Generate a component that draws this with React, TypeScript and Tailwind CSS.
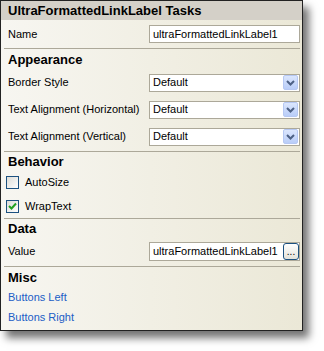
import React from 'react';

function Chevron() {
  return (
    <span className="w-[15px] h-[15px] mr-[1px] flex items-center justify-center rounded-[2px] border border-[#b6c8f3] bg-gradient-to-b from-[#dbe6fd] to-[#b9cdf8]">
      <svg width="9" height="6" viewBox="0 0 9 6">
        <path d="M1 1 L4.5 4.5 L8 1" stroke="#4d6185" strokeWidth="2" fill="none" />
      </svg>
    </span>
  );
}

function Combo() {
  return (
    <div className="w-[151px] h-[18px] bg-white border border-[#aca899] flex items-center justify-between pl-[3px]">
      <span>Default</span>
      <Chevron />
    </div>
  );
}

function Check({ on }: { on?: boolean }) {
  return (
    <span className="w-[13px] h-[13px] border border-[#1c5180] bg-gradient-to-br from-[#dcdcd7] to-white flex items-center justify-center">
      {on && (
        <svg width="9" height="9" viewBox="0 0 9 9">
          <path d="M1 4 L3.5 6.5 L8 1.5" stroke="#21a121" strokeWidth="2" fill="none" />
        </svg>
      )}
    </span>
  );
}

function Sep() {
  return <div className="h-px bg-[#aca899] ml-[3px] mr-[2px]" />;
}

export default function App() {
  const font = { fontFamily: '"Liberation Sans", Arial, sans-serif' };
  return (
    <div className="w-[324px] h-[351px] bg-white" style={font}>
      <div className="w-[303px] h-[331px] border border-[#222] flex flex-col text-[11px] text-black leading-none shadow-[6px_7px_8px_rgba(0,0,0,0.55)] bg-gradient-to-r from-[#f7f6f1] to-[#ebe8d7]">
        <div className="h-[19px] bg-[#d4d0c8] flex items-center pl-[7px] font-bold text-[13px]">
          UltraFormattedLinkLabel Tasks
        </div>

        <div className="h-[28px] flex items-center justify-between pl-[7px] pr-[2px]">
          <span>Name</span>
          <div className="w-[151px] h-[18px] bg-white border border-[#aca899] flex items-center pl-[3px]">ultraFormattedLinkLabel1</div>
        </div>
        <Sep />

        <div className="h-[20px] flex items-center pl-[7px] font-bold text-[13px]">Appearance</div>
        <div className="h-[27px] flex items-center justify-between pl-[7px] pr-[2px]">
          <span>Border Style</span>
          <Combo />
        </div>
        <div className="h-[27px] flex items-center justify-between pl-[7px] pr-[2px]">
          <span>Text Alignment (Horizontal)</span>
          <Combo />
        </div>
        <div className="h-[27px] flex items-center justify-between pl-[7px] pr-[2px]">
          <span>Text Alignment (Vertical)</span>
          <Combo />
        </div>
        <div className="h-px" />
        <Sep />

        <div className="h-[18px] flex items-center pl-[7px] font-bold text-[13px]">Behavior</div>
        <div className="h-[24px] flex items-center gap-[6px] pl-[5px]">
          <Check />
          <span>AutoSize</span>
        </div>
        <div className="h-[24px] flex items-center gap-[6px] pl-[5px]">
          <Check on />
          <span>WrapText</span>
        </div>
        <Sep />

        <div className="h-[18px] flex items-center pl-[7px] font-bold text-[13px]">Data</div>
        <div className="h-[29px] flex items-center justify-between pl-[7px] pr-[2px]">
          <span>Value</span>
          <div className="w-[151px] h-[19px] bg-white border border-[#aca899] flex items-center justify-between pl-[3px]">
            <span>ultraFormattedLinkLabel1</span>
            <span className="w-[16px] h-[17px] border border-[#1c5180] rounded-[3px] bg-gradient-to-b from-white to-[#e3e2da] flex items-end justify-center pb-[2px] text-[10px]">...</span>
          </div>
        </div>
        <Sep />

        <div className="h-[20px] flex items-center pl-[7px] font-bold text-[13px]">Misc</div>
        <div className="h-[20px] flex items-center pl-[7px] text-[#215dc6]">Buttons Left</div>
        <div className="h-[20px] flex items-center pl-[7px] text-[#215dc6]">Buttons Right</div>
      </div>
    </div>
  );
}
